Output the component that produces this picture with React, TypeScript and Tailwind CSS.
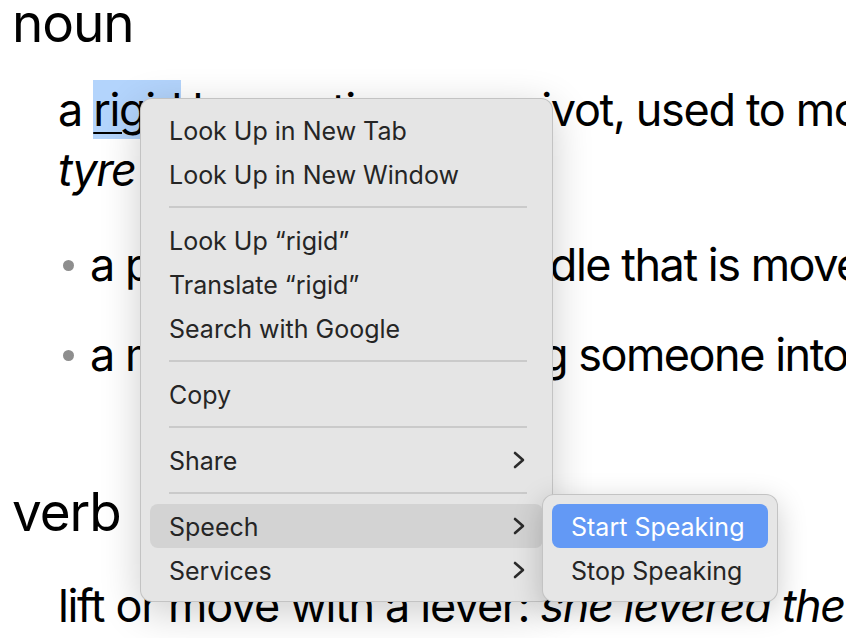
import type { ReactNode } from "react";

type Item =
  | { kind: "item"; label: string; submenu?: boolean; active?: boolean }
  | { kind: "sep" };

const MENU: Item[] = [
  { kind: "item", label: "Look Up in New Tab" },
  { kind: "item", label: "Look Up in New Window" },
  { kind: "sep" },
  { kind: "item", label: "Look Up \u201Crigid\u201D" },
  { kind: "item", label: "Translate \u201Crigid\u201D" },
  { kind: "item", label: "Search with Google" },
  { kind: "sep" },
  { kind: "item", label: "Copy" },
  { kind: "sep" },
  { kind: "item", label: "Share", submenu: true },
  { kind: "sep" },
  { kind: "item", label: "Speech", submenu: true, active: true },
  { kind: "item", label: "Services", submenu: true },
];

function Chevron() {
  return (
    <svg width="12" height="18" viewBox="0 0 12 18" fill="none">
      <path
        d="M2 2l8 7-8 7"
        stroke="#2b2b2b"
        strokeWidth="2.6"
        strokeLinecap="round"
        strokeLinejoin="round"
      />
    </svg>
  );
}

function Row({ children, active }: { children: ReactNode; active?: boolean }) {
  return (
    <div
      className={
        "flex h-[44px] items-center justify-between rounded-[8px] pl-[19px] pr-[18px] pt-[4px] " +
        (active ? "bg-[#d3d3d3]" : "")
      }
    >
      {children}
    </div>
  );
}

function ContextMenu() {
  return (
    <div className="absolute left-[140px] top-[98px] z-10 w-[413px] rounded-[12px] border border-black/15 bg-[#e5e5e5] p-[9px] text-[25px] text-[#252525] shadow-[0_10px_40px_rgba(0,0,0,0.2)]">
      {MENU.map((item, i) =>
        item.kind === "sep" ? (
          <div key={i} className="flex h-[22px] items-center pl-[19px] pr-[16px]">
            <div className="h-[2px] w-full bg-[#cacaca]" />
          </div>
        ) : (
          <Row key={i} active={item.active}>
            <span>{item.label}</span>
            {item.submenu && (
              <span className="-mt-[4px]">
                <Chevron />
              </span>
            )}
          </Row>
        )
      )}
    </div>
  );
}

function SpeechMenu() {
  return (
    <div className="absolute left-[542px] top-[494px] z-20 w-[236px] rounded-[12px] border border-black/15 bg-[#e6e6e6] p-[9px] text-[25px] text-[#252525] shadow-[0_8px_30px_rgba(0,0,0,0.2)]">
      <div className="flex h-[44px] items-center rounded-[8px] bg-[#6399f5] pl-[19px] pt-[4px] text-white">
        Start Speaking
      </div>
      <div className="flex h-[44px] items-center pl-[19px] pt-[4px]">Stop Speaking</div>
    </div>
  );
}

export default function App() {
  return (
    <div className="relative h-[638px] w-[846px] overflow-hidden bg-white font-['Inter',sans-serif] text-black">
      <div className="flex flex-col whitespace-nowrap">
        <div className="-mt-[7px] h-[60px] pl-[12px] text-[53px] leading-[60px] tracking-[-0.02em]">
          noun
        </div>

        <div className="mt-[27px] pl-[58px] text-[45px] leading-[60px] tracking-[-0.03em]">
          <div>
            a{" "}
            <span className="bg-[#b3d4fc] py-[2px] underline decoration-[2px] underline-offset-[6px]">
              rigid
            </span>{" "}
            bar resting on a pivot, used to move a heavy or firmly fixed load with one end
            when pressure is applied to the other: a
          </div>
          <div className="italic">tyre lever</div>
        </div>

        <div className="mt-[35px] pl-[63px] text-[45px] leading-[60px] tracking-[-0.033em]">
          <span className="mr-[16px] inline-block h-[11px] w-[11px] rounded-full bg-[#8e8e8e] align-[10px]" />
          a projecting arm or handle that is moved to operate a mechanism
        </div>

        <div className="mt-[30px] pl-[63px] text-[45px] leading-[60px] tracking-[-0.033em]">
          <span className="mr-[16px] inline-block h-[11px] w-[11px] rounded-full bg-[#8e8e8e] align-[10px]" />
          a means of pressurizing someone into action
        </div>

        <div className="mt-[97px] flex items-baseline pl-[12px]">
          <span className="text-[53px] leading-[60px] tracking-[-0.02em]">verb</span>
          <span className="ml-[88px] text-[45px] italic leading-[60px] tracking-[-0.03em] text-[#3a3a3a]">
            [with object and adverbial]
          </span>
        </div>

        <div className="mt-[31px] pl-[58px] text-[45px] leading-[60px] tracking-[-0.03em]">
          lift or move with a lever:{" "}
          <span className="italic">she levered the lid off with a screwdriver</span>
        </div>
      </div>

      <ContextMenu />
      <SpeechMenu />
    </div>
  );
}
